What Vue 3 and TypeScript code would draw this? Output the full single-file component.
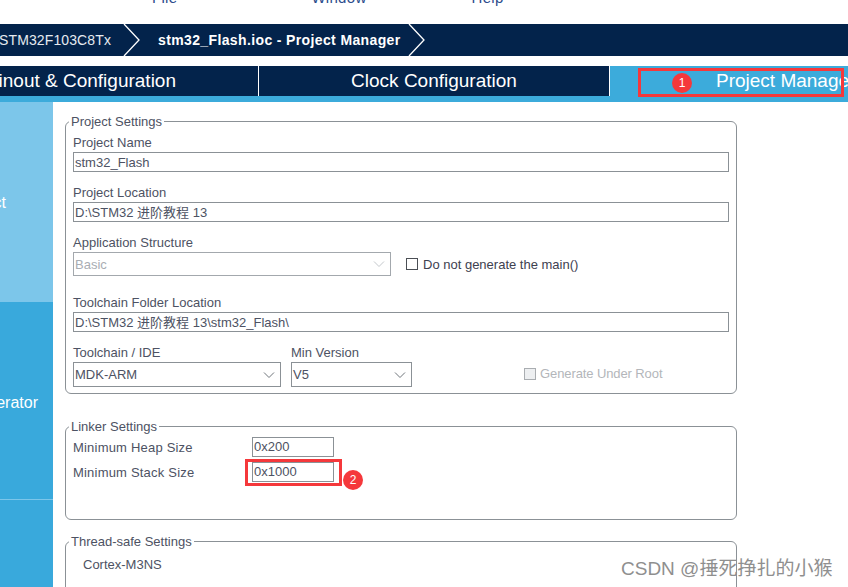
<script setup lang="ts">
const menus = ['File', 'Window', 'Help'];
</script>

<template>
  <div class="page">
    <nav class="menu">
      <span v-for="m in menus" :key="m" class="menu-item" :class="'menu-' + m.toLowerCase()">{{ m }}</span>
    </nav>

    <div class="crumbs">
      <span class="crumb-mcu">STM32F103C8Tx</span>
      <svg class="chev chev-a" width="18" height="32" viewBox="0 0 18 32"><path d="M1 0 L16 16 L1 32" fill="none" stroke="#fff" stroke-width="1.3" /></svg>
      <span class="crumb-file">stm32_Flash.ioc - Project Manager</span>
      <svg class="chev chev-b" width="18" height="32" viewBox="0 0 18 32"><path d="M1 0 L16 16 L1 32" fill="none" stroke="#fff" stroke-width="1.3" /></svg>
    </div>

    <div class="tabs">
      <div class="tab tab-pinout"><span>Pinout &amp; Configuration</span></div>
      <div class="tab tab-clock">Clock Configuration</div>
      <div class="tab tab-project"><span>Project Manager</span></div>
    </div>
    <div class="stripe"></div>

    <div class="body">
      <aside class="side">
        <div class="side-item side-project"><span>Project</span></div>
        <div class="side-item side-code"><span>Code Generator</span></div>
        <div class="side-item side-adv"></div>
      </aside>

      <main class="content">
        <fieldset class="group group-project">
          <legend>Project Settings</legend>
          <label class="lbl">Project Name</label>
          <div class="field">stm32_Flash</div>
          <label class="lbl">Project Location</label>
          <div class="field">D:\STM32 进阶教程 13</div>
          <label class="lbl">Application Structure</label>
          <div class="row-app">
            <div class="combo combo-app disabled">
              <span>Basic</span>
              <svg width="14" height="8" viewBox="0 0 14 8"><path d="M2 1.5 L7 6.5 L12 1.5" fill="none" stroke="#c4c8cc" stroke-width="1" /></svg>
            </div>
            <span class="check"></span>
            <span class="check-text">Do not generate the main()</span>
          </div>
          <label class="lbl lbl-folder">Toolchain Folder Location</label>
          <div class="field">D:\STM32 进阶教程 13\stm32_Flash\</div>
          <div class="row-tool">
            <div class="col-ide">
              <label class="lbl">Toolchain / IDE</label>
              <div class="combo">
                <span>MDK-ARM</span>
                <svg width="14" height="8" viewBox="0 0 14 8"><path d="M2 1.5 L7 6.5 L12 1.5" fill="none" stroke="#6f757b" stroke-width="1" /></svg>
              </div>
            </div>
            <div class="col-ver">
              <label class="lbl">Min Version</label>
              <div class="combo">
                <span>V5</span>
                <svg width="14" height="8" viewBox="0 0 14 8"><path d="M2 1.5 L7 6.5 L12 1.5" fill="none" stroke="#6f757b" stroke-width="1" /></svg>
              </div>
            </div>
            <div class="root-opt">
              <span class="check check-off"></span>
              <span class="root-text">Generate Under Root</span>
            </div>
          </div>
        </fieldset>

        <fieldset class="group group-linker">
          <legend>Linker Settings</legend>
          <div class="size-row">
            <span class="size-lbl">Minimum Heap Size</span>
            <div class="field size-field">0x200</div>
          </div>
          <div class="size-row">
            <span class="size-lbl">Minimum Stack Size</span>
            <div class="field size-field">0x1000</div>
          </div>
        </fieldset>

        <fieldset class="group group-thread">
          <legend>Thread-safe Settings</legend>
          <div class="core">Cortex-M3NS</div>
        </fieldset>
      </main>
    </div>

    <div class="mark mark-tab"></div>
    <div class="badge badge-tab">1</div>
    <div class="mark mark-stack"></div>
    <div class="badge badge-stack">2</div>
    <div class="watermark">CSDN @捶死挣扎的小猴</div>
  </div>
</template>

<style>
html,
body {
  margin: 0;
  background: #fff;
}
</style>

<style scoped>
.page {
  position: relative;
  width: 848px;
  height: 587px;
  overflow: hidden;
  background: #fff;
  font-family: "Liberation Sans", "Noto Sans CJK SC", sans-serif;
  font-size: 13px;
  color: #4d5263;
}

.menu {
  display: flex;
  height: 24px;
  overflow: hidden;
}

.menu-item {
  margin-top: -11px;
  font-size: 15px;
  line-height: 18px;
  color: #2c4c8c;
  letter-spacing: 0.3px;
}

.menu-file {
  margin-left: 152px;
}

.menu-window {
  margin-left: 134px;
}

.menu-help {
  margin-left: 105px;
}

.crumbs {
  display: flex;
  align-items: center;
  height: 32px;
  background: #03234b;
  color: #fff;
  font-size: 14px;
  white-space: nowrap;
}

.crumb-mcu {
  margin-left: -1px;
  letter-spacing: 0.12px;
  color: #e6eaf0;
}

.chev-a {
  margin-left: 12px;
}

.crumb-file {
  margin-left: 17px;
  font-weight: 700;
  letter-spacing: 0.37px;
}

.chev-b {
  margin-left: 7px;
}

.tabs {
  display: flex;
  height: 30px;
  margin-top: 10px;
  color: #fff;
  font-size: 19px;
  white-space: nowrap;
}

.tab {
  display: flex;
  align-items: center;
  overflow: hidden;
  background: #03234b;
}

.tab-pinout {
  width: 258px;
  justify-content: flex-end;
  padding-right: 82px;
  box-sizing: border-box;
}

.tab-clock {
  width: 350px;
  margin-left: 1px;
  justify-content: center;
  box-sizing: border-box;
}

.tab-project {
  flex: 1;
  margin-left: 1px;
  background: #3cabdb;
  padding-left: 106px;
}

.stripe {
  height: 6px;
  background: #3cabdb;
}

.body {
  display: flex;
  height: 485px;
}

.side {
  display: flex;
  flex-direction: column;
  width: 53px;
  flex: none;
  color: #fff;
  font-size: 16px;
  white-space: nowrap;
}

.side-item {
  display: flex;
  align-items: center;
  justify-content: flex-end;
  overflow: hidden;
  background: #39a9dc;
  box-sizing: border-box;
}

.side-project {
  height: 200px;
  background: #7cc6ea;
  padding: 2px 47px 0 0;
}

.side-code {
  height: 198px;
  padding: 4px 15px 0 0;
  border-bottom: 1px solid #7cc6ea;
}

.side-adv {
  flex: 1;
}

.content {
  flex: 1;
  padding: 11px 0 0 12px;
  min-width: 0;
}

.group {
  width: 672px;
  box-sizing: border-box;
  margin: 0;
  padding: 0 7px;
  border: 1px solid #8b9196;
  border-radius: 6px;
  min-width: 0;
}

.group legend {
  margin-left: -4px;
  padding: 0 2px;
  height: 16px;
  line-height: 18px;
  font-size: 13px;
}

.group-project {
  height: 281px;
}

.group-linker {
  height: 102px;
  margin-top: 24px;
}

.group-thread {
  height: 90px;
  margin-top: 13px;
}

.lbl {
  display: block;
  height: 18px;
  line-height: 18px;
}

.field {
  height: 20px;
  box-sizing: border-box;
  border: 1px solid #8b9196;
  padding-left: 1px;
  line-height: 18px;
  margin-bottom: 12px;
}

.group-project .field {
  width: 656px;
  line-height: 20px;
}

.group-project > .lbl:first-of-type {
  margin-top: 5px;
}

.row-app {
  display: flex;
  align-items: center;
  height: 24px;
}

.combo {
  display: flex;
  align-items: center;
  justify-content: space-between;
  height: 25px;
  box-sizing: border-box;
  border: 1px solid #8b9196;
  padding: 0 4px 0 1px;
}

.combo-app {
  width: 318px;
  height: 24px;
  border-color: #a3a8ad;
}

.combo.disabled {
  color: #a9adb3;
}

.check {
  display: inline-block;
  width: 12px;
  height: 12px;
  box-sizing: border-box;
  border: 1px solid #4b4f55;
  margin-left: 15px;
  flex: none;
}

.check-text {
  margin-left: 5px;
  color: #3e4150;
}

.lbl-folder {
  margin-top: 18px;
}

.row-tool {
  display: flex;
  align-items: flex-start;
}

.col-ide {
  width: 208px;
}

.col-ver {
  width: 121px;
  margin-left: 10px;
}

.root-opt {
  display: flex;
  align-items: center;
  margin-left: 112px;
  margin-top: 22px;
}

.check-off {
  margin-left: 0;
  background: #edeff1;
  border-color: #a9adb1;
}

.root-text {
  margin-left: 4px;
  letter-spacing: -0.1px;
  color: #b3b6ba;
}

.size-row {
  display: flex;
  align-items: center;
  height: 20px;
  margin-bottom: 5px;
}

.size-row:first-of-type {
  margin-top: 3px;
}

.size-lbl {
  width: 179px;
  letter-spacing: 0.2px;
}

.size-field {
  width: 82px;
  margin-bottom: 0;
}

.core {
  margin: 8px 0 0 10px;
}

.mark {
  position: absolute;
  box-sizing: border-box;
  border: 3px solid #f5383b;
}

.mark-tab {
  left: 638px;
  top: 68px;
  width: 206px;
  height: 29px;
}

.mark-stack {
  left: 245px;
  top: 459px;
  width: 97px;
  height: 27px;
}

.badge {
  position: absolute;
  width: 20px;
  height: 20px;
  border-radius: 50%;
  background: #f5383b;
  color: #fff;
  font-size: 12px;
  line-height: 20px;
  text-align: center;
}

.badge-tab {
  left: 672px;
  top: 73px;
}

.badge-stack {
  left: 343px;
  top: 470px;
}

.watermark {
  position: absolute;
  left: 621px;
  top: 558px;
  font-size: 19px;
  line-height: 22px;
  color: #8f8f8f;
  white-space: nowrap;
}
</style>
